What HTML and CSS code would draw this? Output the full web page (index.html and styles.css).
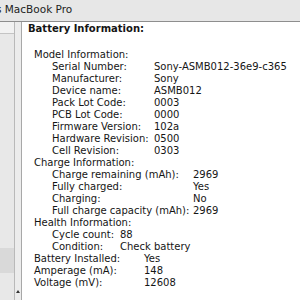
FILE: index.html
```html
<!DOCTYPE html>
<html lang="en">
<head>
<meta charset="UTF-8">
<title>MacBook Pro</title>
<link rel="stylesheet" href="styles.css">
</head>
<body>
	<div class="titlebar"><span class="title">s MacBook Pro</span></div>
	<div class="main">
		<div class="sidebar">
			<div class="side-head"></div>
			<div class="side-fill"></div>
			<div class="side-band"></div>
			<div class="side-rest"></div>
		</div>
		<div class="splitter"><span class="arrow"></span></div>
		<div class="content">
			<div class="heading">Battery Information:</div>

			<div class="group">Model Information:</div>
			<dl class="rows model">
				<dt>Serial Number:</dt><dd>Sony-ASMB012-36e9-c365</dd>
				<dt>Manufacturer:</dt><dd>Sony</dd>
				<dt>Device name:</dt><dd>ASMB012</dd>
				<dt>Pack Lot Code:</dt><dd>0003</dd>
				<dt>PCB Lot Code:</dt><dd>0000</dd>
				<dt>Firmware Version:</dt><dd>102a</dd>
				<dt>Hardware Revision:</dt><dd>0500</dd>
				<dt>Cell Revision:</dt><dd>0303</dd>
			</dl>

			<div class="group">Charge Information:</div>
			<dl class="rows charge">
				<dt>Charge remaining (mAh):</dt><dd>2969</dd>
				<dt>Fully charged:</dt><dd>Yes</dd>
				<dt>Charging:</dt><dd>No</dd>
				<dt>Full charge capacity (mAh):</dt><dd>2969</dd>
			</dl>

			<div class="group">Health Information:</div>
			<dl class="rows health">
				<dt>Cycle count:</dt><dd>88</dd>
				<dt>Condition:</dt><dd>Check battery</dd>
			</dl>

			<dl class="rows top">
				<dt>Battery Installed:</dt><dd>Yes</dd>
				<dt>Amperage (mA):</dt><dd>148</dd>
				<dt>Voltage (mV):</dt><dd>12608</dd>
			</dl>
		</div>
	</div>
</body>
</html>
```

FILE: styles.css
```css
html, body {
	margin: 0;
	padding: 0;
	height: 300px;
	overflow: hidden;
}

body {
	font-family: "DejaVu Sans", sans-serif;
	font-size: 10px;
	color: #151515;
	background: #fff;
}

.titlebar {
	height: 21px;
	line-height: 19px;
	font-size: 10.5px;
	background: #e7e7e7;
	border-bottom: 1px solid #8e8e8e;
	white-space: nowrap;
	overflow: hidden;
	color: #222;
}

.title {
	margin-left: -4px;
}

.main {
	display: flex;
	height: 278px;
}

.sidebar {
	width: 14px;
	display: flex;
	flex-direction: column;
	background: #e8e8e8;
	border-right: 1px solid #b9b9b9;
}

.side-head {
	height: 11px;
	background: #f2f2f2;
	border-bottom: 1px solid #c4c4c4;
}

.side-fill {
	height: 214px;
}

.side-band {
	height: 25px;
	background: #d9d9d9;
}

.splitter {
	width: 7px;
	background: #ececec;
	border-right: 1px solid #a8a8a8;
	display: flex;
	flex-direction: column;
	justify-content: flex-end;
	align-items: center;
	padding-bottom: 7px;
	box-sizing: border-box;
}

.arrow {
	width: 0;
	height: 0;
	border-left: 2px solid transparent;
	border-right: 2px solid transparent;
	border-bottom: 3px solid #333;
}

.content {
	flex: 1;
	padding: 1px 0 0 6px;
	line-height: 12px;
	white-space: nowrap;
}

.heading {
	font-weight: bold;
	margin-bottom: 14px;
}

.group {
	padding-left: 6px;
}

.rows {
	display: grid;
	margin: 0;
	padding-left: 24px;
}

.rows dt, .rows dd {
	margin: 0;
}

.model { grid-template-columns: 102px auto; }
.charge { grid-template-columns: 141px auto; }
.health { grid-template-columns: 68px auto; }

.top {
	padding-left: 6px;
	grid-template-columns: 110px auto;
}
```
